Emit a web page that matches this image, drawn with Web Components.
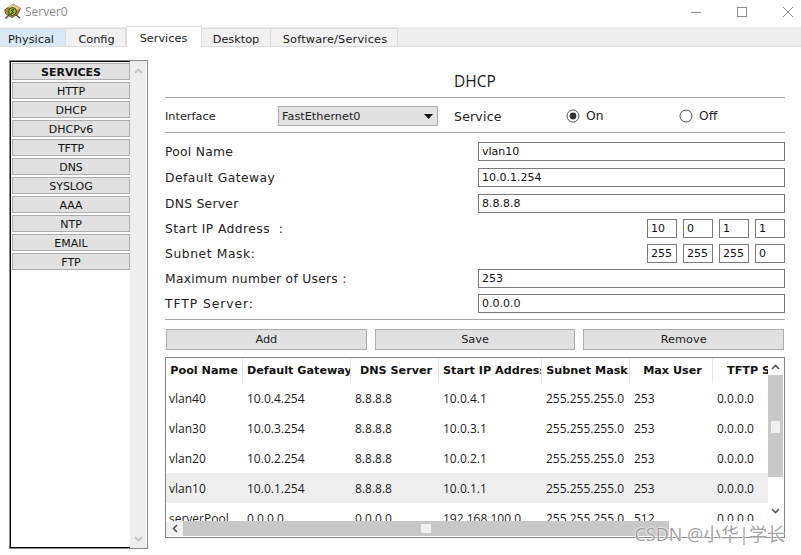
<!DOCTYPE html>
<html>
<head>
<meta charset="utf-8">
<title>Server0</title>
<style>
    html, body { margin: 0; background: #fff; }
    body { width: 801px; height: 555px; overflow: hidden; font-family: "DejaVu Sans", sans-serif; }
</style>
</head>
<body>
<pt-window>
    <pt-titlebar title="Server0"></pt-titlebar>
    <pt-tabs></pt-tabs>
    <div style="display:flex">
        <pt-sidebar></pt-sidebar>
        <pt-dhcp></pt-dhcp>
    </div>
    <pt-watermark>CSDN @小华|学长</pt-watermark>
</pt-window>
<script>
function define(name, html, setup) {
    customElements.define(name, class extends HTMLElement {
        constructor() {
            super();
            this.attachShadow({mode: "open"});
            this.shadowRoot.innerHTML = typeof html === "function" ? html(this) : html;
        }
        connectedCallback() {
            if (setup) setup(this);
        }
    });
}

define("pt-window", `
    <style>:host { display: block; position: relative; width: 801px; height: 555px; overflow: hidden; }</style>
    <slot></slot>
`);

define("pt-titlebar", (el) => `
    <style>
        :host { display: flex; align-items: center; height: 27px; box-sizing: border-box; padding: 0 0 4px 3px; color: #8a8a8a; }
        svg { display: block; }
        .icon { margin-right: 4px; }
        .name { font: 12px "Open Sans", sans-serif; flex: 1; }
        .ctl { width: 46px; display: flex; justify-content: center; }
        .ctl.last { margin-right: -10px; }
    </style>
    <svg class="icon" width="18" height="18" viewBox="0 0 18 18">
        <path d="M1.5 7 L10 1 L17.5 5.5 L15 11 L9 14.5 L3 11 Z" fill="#b08643" stroke="#5e4720" stroke-width=".8"/>
        <path d="M10 1 L17.5 5.5 L12 8 L5 4 Z" fill="#e2cb8c"/>
        <path d="M13 12 L17 15" stroke="#4a4a44" stroke-width="1.5"/>
        <circle cx="9.5" cy="8.5" r="3.9" fill="#a3b52c" stroke="#2d3a10" stroke-width=".9"/>
        <path d="M11.1 7 C9.2 6 7.8 7.6 9.5 8.5 C11.2 9.4 10 11 8 10" fill="none" stroke="#15150c" stroke-width="1"/>
        <path d="M6.5 11.5 L2.5 15.5" stroke="#55554e" stroke-width="1.7"/>
    </svg>
    <span class="name">${el.getAttribute("title")}</span>
    <span class="ctl"><svg width="12" height="12"><path d="M1 6.5H11" stroke="#8c8c8c"/></svg></span>
    <span class="ctl"><svg width="12" height="12"><rect x="1.5" y="1.5" width="9" height="9" fill="none" stroke="#8c8c8c"/></svg></span>
    <span class="ctl last"><svg width="12" height="12"><path d="M1 1L11 11M11 1L1 11" stroke="#8c8c8c"/></svg></span>
`);

define("pt-tabs", `
    <style>
        :host { display: flex; align-items: flex-end; height: 20px; box-sizing: border-box; background: #eeeeee; border-bottom: 1px solid #dcdcdc;
            font: 11.3px "DejaVu Sans", sans-serif; color: #1a1a1a; }
        .tab { height: 18px; box-sizing: border-box; padding-top: 3px; display: flex; align-items: center; justify-content: center;
            border-right: 1px solid #dcdcdc; border-top: 1px solid #dcdcdc; background: #f1f1f1; }
        .tab.first { background: #d9e8f7; width: 66px; padding-right: 3px; }
        .tab.on { background: #fff; height: 21px; margin-bottom: -1px; width: 76px; border: 1px solid #dcdcdc; border-bottom: 0; padding: 2px 1px 0 0; position: relative; }
        .cfg { padding-left: 2px; }
        .wide { letter-spacing: .2px; padding-left: 2px; }
    </style>
    <div class="tab first">Physical</div>
    <div class="tab cfg" style="width:60px">Config</div>
    <div class="tab on">Services</div>
    <div class="tab" style="width:69px">Desktop</div>
    <div class="tab wide" style="width:127px">Software/Services</div>
`);

define("pt-sidebar", `
    <style>
        :host { display: flex; width: 139px; height: 489px; margin: 13px 0 0 9px; box-sizing: border-box; border: 1px solid #8a8a90; }
        .list { width: 120px; box-sizing: border-box; padding: 1px 0 0 1px; display: flex; flex-direction: column; gap: 2px;
            border: 1px solid #000; border-right: 0; background: #fff; }
        .item { height: 17px; flex: none; box-sizing: border-box; padding-top: 1px; width: 118px; background: #e1e1e1; border: 1px solid #adadad;
            display: flex; align-items: center; justify-content: center; font: 11px "DejaVu Sans", sans-serif; color: #111; }
        .item.head { font-weight: bold; }
        .bar { width: 16px; background: #eeeeee; display: flex; flex-direction: column; justify-content: space-between; align-items: center; padding: 7px 0 6px; box-sizing: border-box; }
    </style>
    <div class="list">
        <div class="item head">SERVICES</div>
        <div class="item">HTTP</div>
        <div class="item">DHCP</div>
        <div class="item">DHCPv6</div>
        <div class="item">TFTP</div>
        <div class="item">DNS</div>
        <div class="item">SYSLOG</div>
        <div class="item">AAA</div>
        <div class="item">NTP</div>
        <div class="item">EMAIL</div>
        <div class="item">FTP</div>
    </div>
    <div class="bar">
        <svg width="9" height="6"><path d="M1 5L4.5 1.5L8 5" fill="none" stroke="#c4c4c4" stroke-width="1.8"/></svg>
        <svg width="9" height="6"><path d="M1 1L4.5 4.5L8 1" fill="none" stroke="#c4c4c4" stroke-width="1.8"/></svg>
    </div>
`);

define("pt-row", (el) => `
    <style>
        :host { display: flex; align-items: center; height: 19px; margin-bottom: 6px; font: 12.3px "DejaVu Sans", sans-serif; color: #222; }
        .label { width: 313px; white-space: pre; letter-spacing: ${el.getAttribute("track") || ".28"}px; }
        .value { flex: 1; display: flex; }
        .octets { flex: 1; display: flex; justify-content: flex-end; gap: 6px; }
        pt-field.oct { width: 30px; }
    </style>
    <span class="label">${el.getAttribute("label")}</span>
    ${el.hasAttribute("octets")
        ? `<div class="octets">${el.getAttribute("octets").split(".").map(o => `<pt-field class="oct">${o}</pt-field>`).join("")}</div>`
        : `<div class="value"><pt-field style="flex:1">${el.getAttribute("value")}</pt-field></div>`}
`);

define("pt-field", `
    <style>
        :host { display: block; box-sizing: border-box; height: 19px; border: 1px solid #7a7a7a; background: #fff; padding: 0 3px;
            font: 11px/17px "DejaVu Sans", sans-serif; color: #111; }
    </style>
    <slot></slot>
`);

define("pt-radio", (el) => `
    <style>
        :host { display: flex; align-items: center; gap: 6px; font: 12.3px "DejaVu Sans", sans-serif; color: #222; }
        svg { display: block; }
    </style>
    <svg width="14" height="14" viewBox="0 0 14 14">
        <circle cx="7" cy="7" r="6" fill="#fff" stroke="#555"/>
        ${el.hasAttribute("checked") ? '<circle cx="7" cy="7" r="3.4" fill="#333"/>' : ""}
    </svg>
    <slot></slot>
`);

define("pt-dhcp", `
    <style>
        :host { display: block; width: 620px; margin: 0 0 0 17px; }
        .title { height: 51px; box-sizing: border-box; padding-top: 24px; text-align: center; font: 15.5px "Open Sans", sans-serif; color: #1a1a1a;
            border-bottom: 1px solid #a8a8a8; line-height: 21px; }
        .iface { height: 35px; box-sizing: border-box; padding-top: 2px; display: flex; align-items: center; border-bottom: 1px solid #a8a8a8;
            font: 11.3px "DejaVu Sans", sans-serif; color: #222; margin-bottom: 9px; }
        .iface .lbl { width: 113px; }
        .select { width: 160px; height: 20px; box-sizing: border-box; background: #e1e1e1; border: 1px solid #adadad; display: flex; align-items: center; justify-content: space-between; padding: 0 4px 0 3px; }
        .svc { width: 112px; margin-left: 16px; font-size: 12.5px; letter-spacing: .2px; }
        .on { width: 113px; }
        .rows { border-bottom: 1px solid #a8a8a8; margin-bottom: 9px; }
        .tall { margin-bottom: 7px; }
        .btns { display: flex; gap: 8px; margin: 0 1px 7px 1px; }
        .btn { flex: 1; height: 21px; box-sizing: border-box; background: #e1e1e1; border: 1px solid #adadad; display: flex; align-items: center; justify-content: center;
            font: 11.3px "DejaVu Sans", sans-serif; color: #222; }
    </style>
    <div class="title">DHCP</div>
    <div class="iface">
        <span class="lbl">Interface</span>
        <div class="select"><span>FastEthernet0</span><svg width="9" height="5"><path d="M0 0H9L4.5 5Z" fill="#111"/></svg></div>
        <span class="svc">Service</span>
        <pt-radio class="on" checked>On</pt-radio>
        <pt-radio>Off</pt-radio>
    </div>
    <div class="rows">
        <pt-row class="tall" label="Pool Name" value="vlan10"></pt-row>
        <pt-row class="tall" label="Default Gateway" track=".48" value="10.0.1.254"></pt-row>
        <pt-row label="DNS Server" value="8.8.8.8"></pt-row>
        <pt-row label="Start IP Address  :" track=".45" octets="10.0.1.1"></pt-row>
        <pt-row label="Subnet Mask:" track=".6" octets="255.255.255.0"></pt-row>
        <pt-row label="Maximum number of Users :" value="253"></pt-row>
        <pt-row label="TFTP Server:" track=".95" value="0.0.0.0"></pt-row>
    </div>
    <div class="btns">
        <div class="btn">Add</div>
        <div class="btn">Save</div>
        <div class="btn">Remove</div>
    </div>
    <pt-table></pt-table>
`);

const poolRows = [
    ["vlan40", "10.0.4.254", "8.8.8.8", "10.0.4.1", "255.255.255.0", "253", "0.0.0.0"],
    ["vlan30", "10.0.3.254", "8.8.8.8", "10.0.3.1", "255.255.255.0", "253", "0.0.0.0"],
    ["vlan20", "10.0.2.254", "8.8.8.8", "10.0.2.1", "255.255.255.0", "253", "0.0.0.0"],
    ["vlan10", "10.0.1.254", "8.8.8.8", "10.0.1.1", "255.255.255.0", "253", "0.0.0.0"],
    ["serverPool", "0.0.0.0", "0.0.0.0", "192.168.100.0", "255.255.255.0", "512", "0.0.0.0"],
];
const poolHead = ["Pool Name", "Default Gateway", "DNS Server", "Start IP Address", "Subnet Mask", "Max User", "TFTP Server"];

define("pt-table", `
    <style>
        :host { display: grid; grid-template-columns: 602px 16px; grid-template-rows: 163px 16px; width: 620px; height: 181px;
            box-sizing: border-box; border: 1px solid #85858f; }
        .view { overflow: hidden; }
        .tr { display: grid; grid-template-columns: 77px 108px 88px 103px 88px 83px 55px; }
        .th { height: 25px; box-sizing: border-box; padding: 0 1px 0 4px; line-height: 25px; text-align: center; overflow: hidden; white-space: nowrap;
            font-family: "DejaVu Sans", sans-serif; font-weight: bold; font-size: 11.2px; color: #111; border-right: 1px solid #e6e6e6; }
        .th:first-child { padding: 0; }
        .th:last-child { padding-left: 14px; border-right: 0; }
        .td { height: 30px; padding-left: 4px; display: flex; align-items: center; overflow: hidden; white-space: nowrap;
            font: 12px "Open Sans", sans-serif; color: #1a1a1a; }
        .td:first-child { padding-left: 3px; }
        .tr.pick { background: #efefef; }
        .v { background: #fff; display: flex; flex-direction: column; align-items: center; justify-content: space-between; padding: 6px 0 7px; box-sizing: border-box; position: relative; width: 15px; }
        .v .track { position: absolute; top: 17px; left: 0; width: 15px; height: 102px; background: #c8c8c8; }
        .v .thumb { position: absolute; top: 63px; left: 3px; width: 9px; height: 12px; background: #f0f0f0; }
        .h { background: #fff; display: flex; align-items: stretch; grid-column: 1; height: 15px; }
        .h .arrow { width: 17px; display: flex; align-items: center; justify-content: center; background: #f0f0f0; }
        .h .track { width: 486px; background: #c8c8c8; position: relative; }
        .h .thumb { position: absolute; left: 238px; top: 3px; width: 10px; height: 9px; background: #f0f0f0; }
        svg { display: block; position: relative; }
    </style>
    <div class="view">
        <div class="tr" id="head"></div>
        <div id="body"></div>
    </div>
    <div class="v">
        <svg width="9" height="6"><path d="M1 5L4.5 1.5L8 5" fill="none" stroke="#555" stroke-width="1.6"/></svg>
        <div class="track"></div><div class="thumb"></div>
        <svg width="9" height="6"><path d="M1 1L4.5 4.5L8 1" fill="none" stroke="#555" stroke-width="1.6"/></svg>
    </div>
    <div class="h">
        <div class="arrow"><svg width="6" height="9"><path d="M5 1L1.5 4.5L5 8" fill="none" stroke="#555" stroke-width="1.6"/></svg></div>
        <div class="track"><div class="thumb"></div></div>
    </div>
`, (el) => {
    const root = el.shadowRoot;
    root.getElementById("head").innerHTML = poolHead.map(h => `<div class="th">${h}</div>`).join("");
    root.getElementById("body").innerHTML = poolRows.map(row =>
        `<div class="tr${row[0] === "vlan10" ? " pick" : ""}">${row.map(c => `<div class="td">${c}</div>`).join("")}</div>`
    ).join("");
});

define("pt-watermark", `
    <style>
        :host { position: absolute; right: 16px; bottom: 9px; font: 18px "Open Sans", "Noto Sans CJK SC", sans-serif; color: rgba(125,125,125,.72);
            text-shadow: 0 0 2px #fff, 0 0 2px #fff; white-space: nowrap; }
    </style>
    <slot></slot>
`);
</script>
</body>
</html>
